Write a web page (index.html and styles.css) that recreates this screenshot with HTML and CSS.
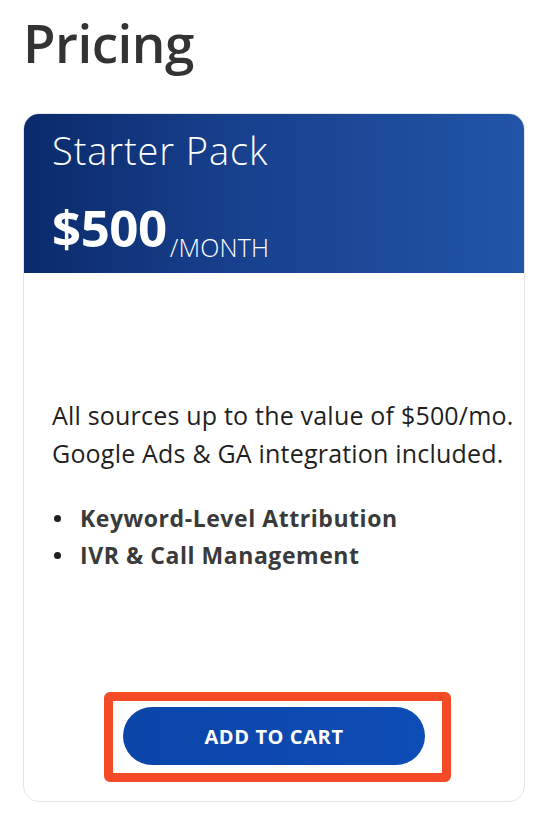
FILE: index.html
```html
<!DOCTYPE html>
<html>
<head>
<meta charset="utf-8">
<link rel="stylesheet" href="styles.css">
</head>
<body>
<h1 class="title">Pricing</h1>
<div class="card">
  <div class="card-head">
    <div class="plan">Starter Pack</div>
    <div class="price"><span class="amount">$500</span><span class="per">/MONTH</span></div>
  </div>
  <div class="card-body">
    <p class="desc">All sources up to the value of $500/mo.<br>Google Ads &amp; GA integration included.</p>
    <ul class="features">
      <li>Keyword-Level Attribution</li>
      <li>IVR &amp; Call Management</li>
    </ul>
    <div class="cta">
      <div class="highlight"><button class="btn">ADD TO CART</button></div>
    </div>
  </div>
</div>
</body>
</html>
```
FILE: styles.css
```css
* { box-sizing: border-box; }
html, body { margin: 0; padding: 0; background: #fff; }
body {
  padding: 0 23px;
  font-family: "Open Sans", "Lato", sans-serif;
  color: #222;
}
.title {
  margin: 0;
  padding-top: 9px;
  font-family: "Open Sans", sans-serif;
  font-weight: 600;
  font-size: 53px;
  line-height: 68px;
  color: #333;
  letter-spacing: -0.5px;
}
.card {
  margin-top: 36px;
  width: 502px;
  height: 689px;
  border: 1px solid #e6e6e6;
  border-radius: 16px;
  overflow: hidden;
  display: flex;
  flex-direction: column;
}
.card-head {
  height: 159px;
  flex: none;
  background: linear-gradient(90deg, #0a2b6b 0%, #173f8c 40%, #2254a7 100%);
  color: #fff;
  padding: 14px 28px 0;
}
.plan {
  font-size: 38px;
  font-weight: 300;
  line-height: 44px;
  letter-spacing: 0.9px;
}
.price {
  margin-top: 25px;
  line-height: 60px;
  height: 60px;
}
.amount {
  font-size: 51px;
  font-weight: 700;
  letter-spacing: -0.5px;
}
.per {
  font-size: 25px;
  font-weight: 300;
  vertical-align: -10px;
  margin-left: 3px;
  letter-spacing: 0.2px;
}
.card-body {
  flex: 1;
  display: flex;
  flex-direction: column;
  padding: 0 28px 19px 28px;
}
.desc {
  margin: 123px 0 0;
  font-size: 25px;
  line-height: 38px;
  letter-spacing: 0.2px;
  color: #1f1f1f;
  white-space: nowrap;
}
.features {
  list-style: none;
  margin: 28px 0 0 2px;
  padding: 0;
  font-size: 23px;
  font-weight: 700;
  line-height: 37px;
  letter-spacing: 0.55px;
  color: #3a3a3a;
}
.features li::before {
  content: "";
  display: inline-block;
  width: 7px;
  height: 7px;
  border-radius: 50%;
  background: #1f1f1f;
  margin-right: 19px;
  vertical-align: 5px;
}
.cta {
  margin-top: auto;
  display: flex;
  justify-content: center;
}
.highlight {
  border: 9px solid #f44a26;
  border-radius: 6px;
  padding: 6px 17px 8px 10px;
  margin-left: 7px;
}
.btn {
  display: block;
  width: 302px;
  height: 58px;
  border: none;
  border-radius: 29px;
  background: linear-gradient(90deg, #0b45a8, #0e4db6);
  color: #fff;
  font-family: "Open Sans", sans-serif;
  font-weight: 700;
  font-size: 20px;
  letter-spacing: 0.6px;
  padding: 0;
}
```
